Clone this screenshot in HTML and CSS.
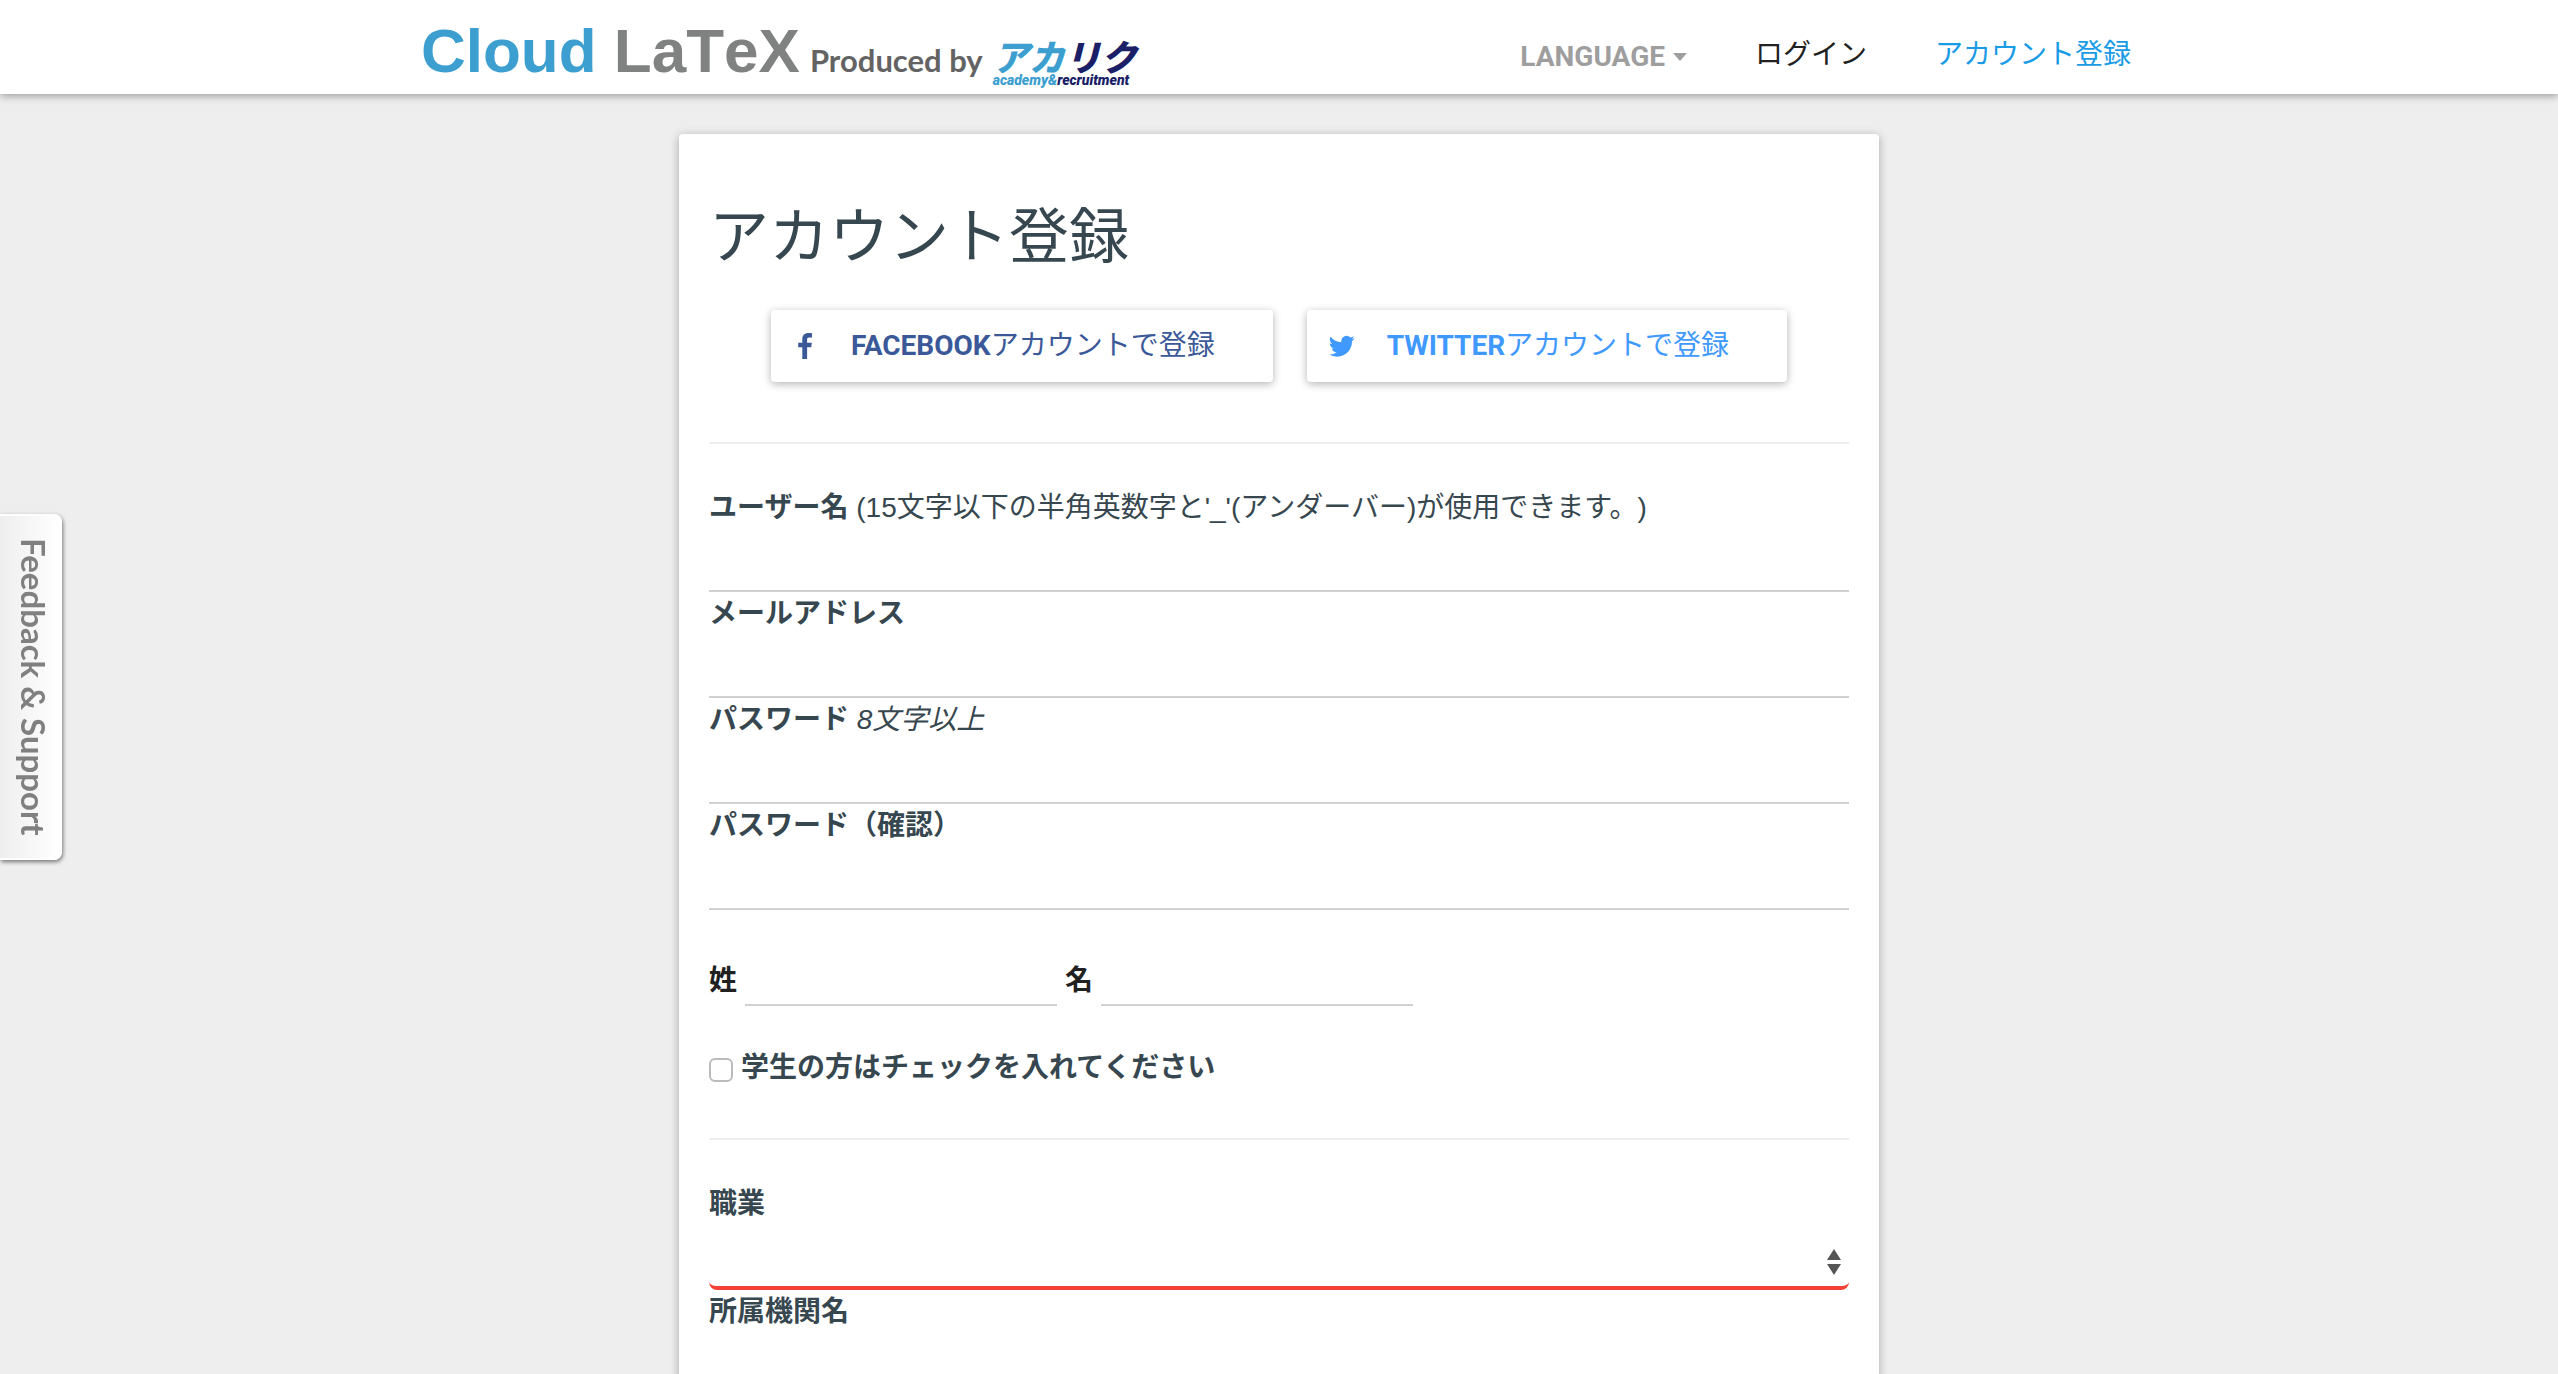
FILE: index.html
```html
<!DOCTYPE html>
<html lang="ja">
<head>
<meta charset="utf-8">
<title>アカウント登録 | Cloud LaTeX</title>
<meta name="viewport" content="width=device-width, initial-scale=1">
<link rel="stylesheet" href="styles.css">
</head>
<body>
<header class="site-header">
  <div class="header-inner">
    <a class="brand" href="#">
      <span class="brand-name"><span class="brand-cloud">Cloud</span> LaTeX</span>
      <span class="brand-by">Produced by</span>
      <span class="producer">
        <span class="producer-name">アカ<span class="navy">リク</span></span>
        <span class="producer-sub">academy&amp;<span class="navy">recruitment</span></span>
      </span>
    </a>
    <nav class="nav">
      <button class="lang" type="button">LANGUAGE<span class="caret"></span></button>
      <a class="nav-link" href="#">ログイン</a>
      <a class="nav-link current" href="#">アカウント登録</a>
    </nav>
  </div>
</header>

<main class="card">
  <h1 class="title">アカウント登録</h1>
  <div class="social">
    <button class="social-btn facebook" type="button">
      <svg class="social-icon" viewBox="0 0 26 26" aria-hidden="true"><path fill="currentColor" d="M19 0.3v4.2h-2.6c-1.9 0-2.3.9-2.3 2.3v2.9h4.7l-.6 4.6h-4.1V26H9.3V14.300H5.200V9.700h4.100V6.200C9.300 2.200 11.800 0 15.400 0c1.700 0 3.200.1 3.600.3z"/></svg>
      <span><b>FACEBOOK</b>アカウントで登録</span>
    </button>
    <button class="social-btn twitter" type="button">
      <svg class="social-icon" viewBox="0 0 24 24" aria-hidden="true"><path fill="currentColor" d="M23.600 4.900a9.600 9.600 0 0 1-2.800.8 4.900 4.900 0 0 0 2.100-2.700 9.700 9.700 0 0 1-3.100 1.200 4.850 4.850 0 0 0-8.300 4.400A13.800 13.800 0 0 1 1.500 3.500a4.850 4.850 0 0 0 1.500 6.500 4.800 4.800 0 0 1-2.200-.6v.1a4.850 4.850 0 0 0 3.900 4.700 4.900 4.900 0 0 1-2.200.1 4.850 4.850 0 0 0 4.500 3.400A9.800 9.800 0 0 1 0 19.700a13.800 13.800 0 0 0 7.400 2.200c8.900 0 13.800-7.400 13.800-13.800v-.6a9.800 9.800 0 0 0 2.400-2.600z"/></svg>
      <span><b>TWITTER</b>アカウントで登録</span>
    </button>
  </div>

  <form class="form">
    <section class="group">
      <div class="field">
        <label for="username"><b>ユーザー名</b> (15文字以下の半角英数字と'_'(アンダーバー)が使用できます。)</label>
        <input class="text" id="username" type="text">
      </div>
      <div class="field">
        <label for="email"><b>メールアドレス</b></label>
        <input class="text" id="email" type="email">
      </div>
      <div class="field">
        <label for="password"><b>パスワード</b> <i>8文字以上</i></label>
        <input class="text" id="password" type="password">
      </div>
      <div class="field">
        <label for="confirm"><b>パスワード（確認）</b></label>
        <input class="text" id="confirm" type="password">
      </div>
      <div class="names">
        <label for="family"><b>姓</b></label>
        <input class="text" id="family" type="text">
        <label for="given"><b>名</b></label>
        <input class="text" id="given" type="text">
      </div>
      <div class="student">
        <input class="check" id="student" type="checkbox">
        <label for="student"><b>学生の方はチェックを入れてください</b></label>
      </div>
    </section>
    <section class="group">
      <div class="field">
        <label for="job"><b>職業</b></label>
        <div class="select-wrap">
          <select class="select" id="job"><option></option></select>
          <svg class="arrows" viewBox="0 0 14 26" aria-hidden="true"><path fill="#555" d="M7 0l7 11H0zM7 26L0 15h14z"/></svg>
        </div>
      </div>
      <div class="field">
        <label for="org"><b>所属機関名</b></label>
        <input class="text" id="org" type="text">
      </div>
    </section>
  </form>
</main>

<button class="feedback" type="button">Feedback &amp; Support</button>
</body>
</html>
```
FILE: styles.css
```css
* {
  box-sizing: border-box;
}

html {
  scrollbar-width: none;
}

body {
  margin: 0;
  background: #eee;
  color: #37474f;
  font: 28px/44px "Liberation Sans", "Noto Sans CJK JP", sans-serif;
  text-spacing-trim: space-all;
}

button,
input,
select {
  font: inherit;
  color: inherit;
}

a {
  text-decoration: none;
}

.site-header {
  background: #fff;
  box-shadow: 0 2px 8px rgba(0, 0, 0, 0.35);
}

.header-inner {
  display: flex;
  justify-content: space-between;
  align-items: center;
  max-width: 1716px;
  height: 94px;
  margin: 0 auto;
}

.brand {
  display: flex;
  align-items: baseline;
  gap: 10px;
  padding-top: 8px;
  white-space: nowrap;
}

.brand-name {
  font-size: 62px;
  line-height: 80px;
  font-weight: 700;
  font-kerning: none;
  color: #808281;
}

.brand-cloud {
  color: #3c9fd0;
}

.brand-by {
  font-family: Lato, sans-serif;
  font-weight: 700;
  font-size: 31px;
  color: #636363;
}

.producer {
  display: flex;
  flex-direction: column;
  align-self: flex-end;
  padding-bottom: 4px;
  color: #3c9fd0;
  font-style: italic;
}

.producer-name {
  font-family: "Noto Sans CJK JP", sans-serif;
  font-weight: 900;
  font-size: 36px;
  line-height: 36px;
}

.producer-sub {
  font-family: Roboto, sans-serif;
  font-weight: 900;
  font-size: 14px;
  line-height: 14px;
}

.navy {
  color: #1a1f68;
}

.nav {
  display: flex;
  align-items: center;
  gap: 68px;
  padding: 16px 6px 0 0;
}

.lang {
  display: flex;
  align-items: center;
  gap: 8px;
  padding: 4px 0 0;
  border: 0;
  background: none;
  color: #9e9e9e;
  font-family: Roboto, sans-serif;
  font-weight: 700;
}

.caret {
  border: 7px solid transparent;
  border-top: 8px solid #9e9e9e;
  border-bottom: 0;
}

.nav-link {
  color: #212121;
}

.nav-link.current {
  color: #1a9be6;
}

.card {
  max-width: 1200px;
  margin: 40px auto;
  padding: 64px 30px;
  background: #fff;
  border-radius: 4px;
  box-shadow: 0 2px 10px rgba(0, 0, 0, 0.3);
}

.title {
  margin: 0;
  font-size: 60px;
  line-height: 80px;
  font-weight: 400;
}

.social {
  display: flex;
  justify-content: center;
  gap: 34px;
  padding: 32px 0 60px;
}

.social-btn {
  display: flex;
  align-items: center;
  gap: 32px;
  height: 72px;
  padding: 0 58px 0 22px;
  border: 0;
  border-radius: 4px;
  background: #fff;
  box-shadow: 0 2px 8px rgba(0, 0, 0, 0.3);
}

.social-btn b {
  font-family: Roboto, sans-serif;
}

.social-icon {
  width: 26px;
  height: 26px;
}

.facebook {
  color: #3b5998;
}

.twitter {
  color: #4099ff;
}

.group {
  padding: 42px 0;
  border-top: 2px solid #eee;
}

.field label {
  display: block;
}

.text {
  display: block;
  width: 100%;
  height: 62px;
  padding: 0;
  border: 0;
  border-bottom: 2px solid #d0d0d0;
  background: none;
  outline: 0;
}

.names {
  display: flex;
  align-items: center;
  gap: 8px;
  margin-top: 42px;
  color: #212121;
}

.names label {
  padding-top: 4px;
}

.names .text {
  width: 312px;
  height: 54px;
}

.student {
  display: flex;
  align-items: center;
  gap: 8px;
  margin: 40px 0 6px;
}

.check {
  width: 24px;
  height: 24px;
  margin: 4px 0 0;
  appearance: none;
  border: 2px solid #bbb;
  border-radius: 6px;
  background: #fff;
}

.select-wrap {
  position: relative;
}

.select {
  display: block;
  width: 100%;
  height: 64px;
  border: 0;
  border-bottom: 4px solid #f44336;
  border-radius: 8px;
  background: none;
  appearance: none;
  outline: 0;
}

.arrows {
  position: absolute;
  right: 8px;
  bottom: 15px;
  width: 14px;
  height: 26px;
}

.feedback {
  position: fixed;
  left: 0;
  top: 514px;
  width: 62px;
  height: 346px;
  padding: 0 0 0 8px;
  border: 2px solid #fff;
  border-left: 0;
  border-radius: 0 8px 8px 0;
  background: linear-gradient(90deg, #eee, #fff);
  box-shadow: 1px 2px 4px rgba(0, 0, 0, 0.5);
  color: #808080;
  font: 700 33px/52px Lato, sans-serif;
  writing-mode: vertical-rl;
}
```
